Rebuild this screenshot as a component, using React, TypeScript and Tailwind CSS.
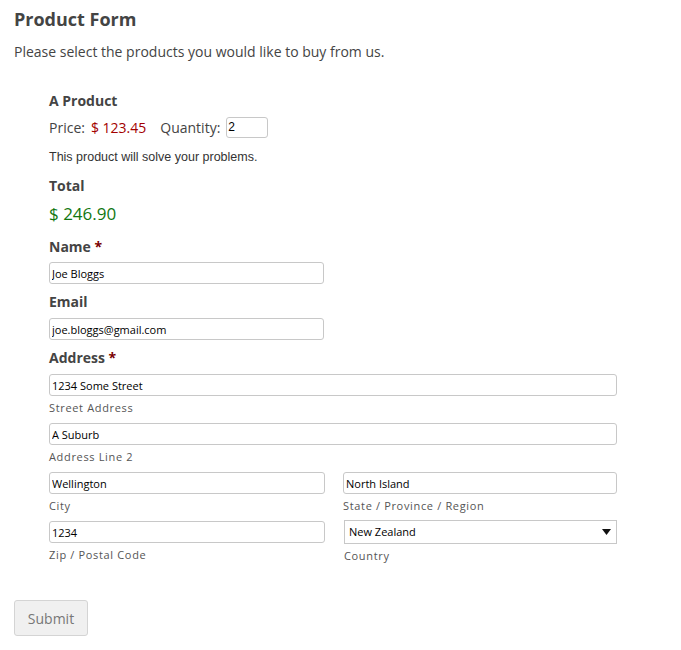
import { useState } from 'react';

const inputCls =
  'block h-[22px] w-full rounded-[3px] border border-[#c8c8c8] bg-white px-[2px] text-[11px] text-black outline-none font-["Open_Sans",sans-serif]';

function SubLabel({ children }: { children: string }) {
  return <div className="mt-[4px] text-[11px] leading-[16px] tracking-[0.06em] text-[#555]">{children}</div>;
}

export default function App() {
  const [qty, setQty] = useState('2');
  const price = 123.45;
  const total = (price * (parseFloat(qty) || 0)).toFixed(2);

  return (
    <div className="min-h-[650px] bg-white px-[14px] pt-[6px] font-['Open_Sans',sans-serif] text-[#444]">
      <h1 className="text-[18px] font-bold leading-[26px] text-[#444]">Product Form</h1>
      <p className="mt-[10px] text-[14px] leading-[20px] text-[#444]">Please select the products you would like to buy from us.</p>

      <div className="ml-[35px] mt-[29px] w-[568px]">
        <div className="text-[14px] font-bold leading-[20px]">A Product</div>
        <div className="mt-[5px] flex h-[22px] items-center text-[14px]">
          <span>Price:</span>
          <span className="ml-[6px] text-[#a30000]">$ 123.45</span>
          <span className="ml-[14px]">Quantity:</span>
          <input
            value={qty}
            onChange={(e) => setQty(e.target.value)}
            className="ml-[6px] block h-[21px] w-[42px] rounded-[3px] border border-[#c8c8c8] px-[1px] text-[12px] text-black outline-none font-['Liberation_Sans',sans-serif]"
          />
        </div>
        <div className="mt-[11px] font-['Liberation_Sans',sans-serif] text-[12.5px] leading-[16px] text-[#333]">
          This product will solve your problems.
        </div>

        <div className="mt-[11px] text-[14px] font-bold leading-[20px]">Total</div>
        <div className="mt-[6px] text-[17px] leading-[24px] text-[#117711]">$ {total}</div>

        <div className="mt-[11px] text-[14px] font-bold leading-[20px]">
          Name <span className="text-[#7a0000]">*</span>
        </div>
        <div className="mt-[5px] w-[275px]">
          <input defaultValue="Joe Bloggs" className={inputCls} />
        </div>

        <div className="mt-[8px] text-[14px] font-bold leading-[20px]">Email</div>
        <div className="mt-[6px] w-[275px]">
          <input defaultValue="joe.bloggs@gmail.com" className={inputCls} />
        </div>

        <div className="mt-[8px] text-[14px] font-bold leading-[20px]">
          Address <span className="text-[#7a0000]">*</span>
        </div>
        <div className="mt-[6px]">
          <input defaultValue="1234 Some Street" className={inputCls} />
          <SubLabel>Street Address</SubLabel>
        </div>
        <div className="mt-[7px]">
          <input defaultValue="A Suburb" className={inputCls} />
          <SubLabel>Address Line 2</SubLabel>
        </div>
        <div className="mt-[7px] grid grid-cols-[276px_274px] gap-x-[18px]">
          <div>
            <input defaultValue="Wellington" className={inputCls} />
            <SubLabel>City</SubLabel>
          </div>
          <div>
            <input defaultValue="North Island" className={inputCls} />
            <SubLabel>State / Province / Region</SubLabel>
          </div>
          <div className="mt-[7px]">
            <input defaultValue="1234" className={inputCls} />
            <SubLabel>Zip / Postal Code</SubLabel>
          </div>
          <div className="mt-[6px] pl-px">
            <div className="relative h-[24px] w-full">
              <select
                defaultValue="New Zealand"
                className="block h-[24px] w-full appearance-none border border-[#c8c8c8] bg-white pl-[4px] text-[11px] text-black outline-none"
              >
                <option>New Zealand</option>
                <option>Australia</option>
                <option>United States</option>
              </select>
              <svg className="pointer-events-none absolute right-[6px] top-[9px]" width="9" height="6" viewBox="0 0 9 6">
                <path d="M0 0h9L4.5 6z" fill="#111" />
              </svg>
            </div>
            <div className="mt-[4px] text-[11px] leading-[16px] tracking-[0.06em] text-[#555]">Country</div>
          </div>
        </div>
      </div>

      <button className="mt-[36px] block h-[36px] w-[74px] rounded-[3px] border border-[#d4d4d4] bg-[#f0f0f0] text-[14px] text-[#777]">
        Submit
      </button>
    </div>
  );
}
